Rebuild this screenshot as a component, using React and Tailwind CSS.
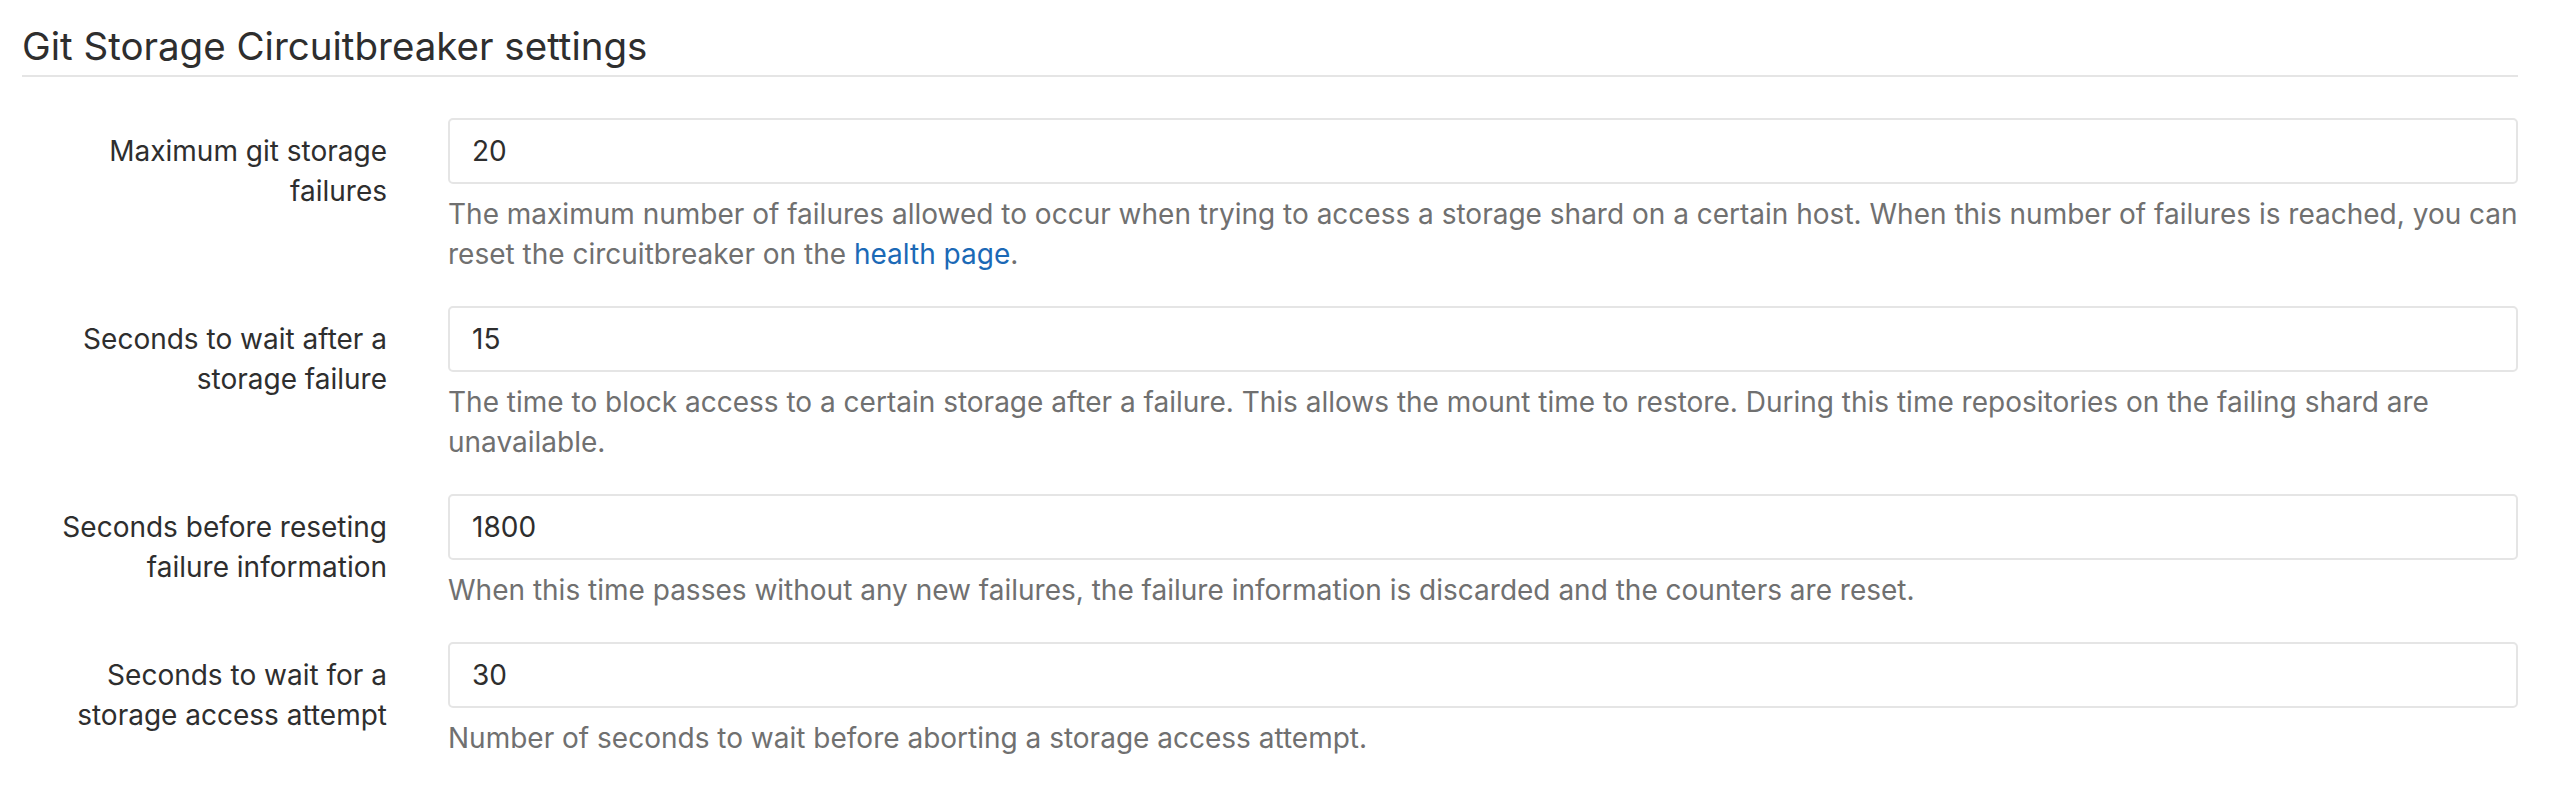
const rows = [
  {
    label: 'Maximum git storage failures',
    value: '20',
    help: (
      <>
        The maximum number of failures allowed to occur when trying to access a storage shard on a certain host. When
        this number of failures is reached, you can reset the circuitbreaker on the{' '}
        <a href="#" className="text-[#1b69b6]">
          health page
        </a>
        .
      </>
    ),
  },
  {
    label: 'Seconds to wait after a storage failure',
    value: '15',
    help: 'The time to block access to a certain storage after a failure. This allows the mount time to restore. During this time repositories on the failing shard are unavailable.',
  },
  {
    label: 'Seconds before reseting failure information',
    value: '1800',
    help: 'When this time passes without any new failures, the failure information is discarded and the counters are reset.',
  },
  {
    label: 'Seconds to wait for a storage access attempt',
    value: '30',
    help: 'Number of seconds to wait before aborting a storage access attempt.',
  },
];

const FormRow = ({ label, value, help }) => (
  <div className="grid grid-cols-[365px_1fr] gap-x-[61px]">
    <label className="pt-[13px] text-right text-[28px] font-normal leading-[40px] text-[#2e2e2e]">{label}</label>
    <div>
      <input
        type="text"
        defaultValue={value}
        className="block h-[66px] w-full rounded-[5px] border-2 border-[#e5e5e5] bg-white px-[22px] text-[28px] text-[#2e2e2e] outline-none"
      />
      <p className="mt-[10px] text-[28px] leading-[40px] text-[#707070]">{help}</p>
    </div>
  </div>
);

export default function App() {
  return (
    <div className="min-h-[810px] bg-white pl-[22px] pr-[54px] font-['Inter','Liberation_Sans',sans-serif]">
      <h4 className="mt-[25px] border-b-2 border-[#e5e5e5] pb-[7px] text-[38.5px] font-normal leading-[43px] text-[#2e2e2e]">
        Git Storage Circuitbreaker settings
      </h4>
      <div className="mt-[41px] flex flex-col gap-[32px]">
        {rows.map((r) => (
          <FormRow key={r.label} {...r} />
        ))}
      </div>
    </div>
  );
}
